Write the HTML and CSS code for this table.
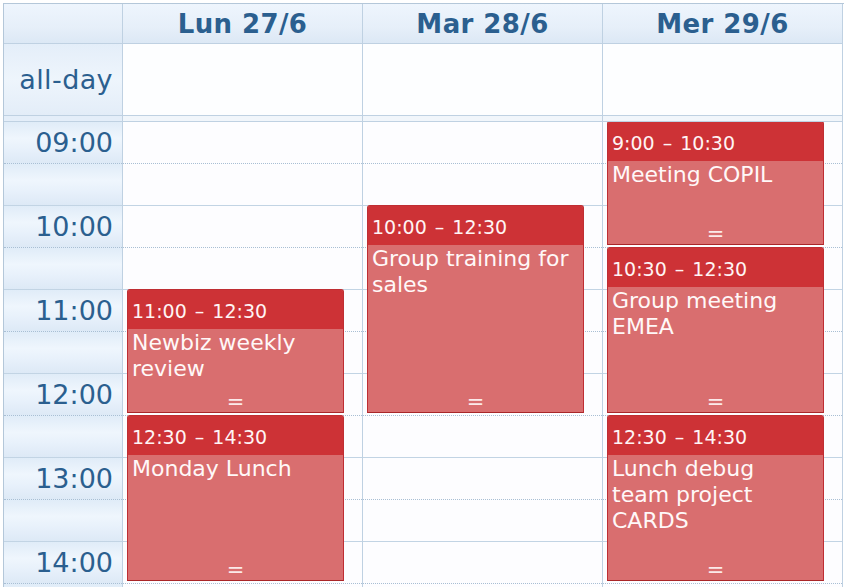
FILE: index.html
```html
<!DOCTYPE html>
<html>
<head>
<meta charset="utf-8">
<link rel="stylesheet" href="styles.css">
</head>
<body>
<div class="cal">
  <div class="row head">
    <div class="gutter"></div>
    <div class="dayhead">Lun 27/6</div>
    <div class="dayhead">Mar 28/6</div>
    <div class="dayhead">Mer 29/6</div>
  </div>
  <div class="row allday">
    <div class="gutter">all-day</div>
    <div class="cell"></div>
    <div class="cell"></div>
    <div class="cell"></div>
  </div>
  <div class="row divider">
    <div class="gutter"></div>
    <div class="cell"></div>
    <div class="cell"></div>
    <div class="cell"></div>
  </div>
  <div class="grid">
    <div class="gcol">
      <div class="hs a"><span>09:00</span></div><div class="hs b"></div>
      <div class="hs a"><span>10:00</span></div><div class="hs b"></div>
      <div class="hs a"><span>11:00</span></div><div class="hs b"></div>
      <div class="hs a"><span>12:00</span></div><div class="hs b"></div>
      <div class="hs a"><span>13:00</span></div><div class="hs b"></div>
      <div class="hs a"><span>14:00</span></div><div class="hs b"></div>
    </div>
    <div class="dcol">
      <div class="hs a"></div><div class="hs b"></div>
      <div class="hs a"></div><div class="hs b"></div>
      <div class="hs a"></div><div class="hs b"></div>
      <div class="hs a"></div><div class="hs b"></div>
      <div class="hs a"></div><div class="hs b"></div>
      <div class="hs a"></div><div class="hs b"></div>
      <div class="ev" style="top:167px;height:124px">
        <div class="ev-time">11:00 – 12:30</div>
        <div class="ev-title">Newbiz weekly review</div>
        <div class="ev-resize">=</div>
      </div>
      <div class="ev" style="top:293px;height:166px">
        <div class="ev-time">12:30 – 14:30</div>
        <div class="ev-title">Monday Lunch</div>
        <div class="ev-resize">=</div>
      </div>
    </div>
    <div class="dcol">
      <div class="hs a"></div><div class="hs b"></div>
      <div class="hs a"></div><div class="hs b"></div>
      <div class="hs a"></div><div class="hs b"></div>
      <div class="hs a"></div><div class="hs b"></div>
      <div class="hs a"></div><div class="hs b"></div>
      <div class="hs a"></div><div class="hs b"></div>
      <div class="ev" style="top:83px;height:208px">
        <div class="ev-time">10:00 – 12:30</div>
        <div class="ev-title">Group training for sales</div>
        <div class="ev-resize">=</div>
      </div>
    </div>
    <div class="dcol">
      <div class="hs a"></div><div class="hs b"></div>
      <div class="hs a"></div><div class="hs b"></div>
      <div class="hs a"></div><div class="hs b"></div>
      <div class="hs a"></div><div class="hs b"></div>
      <div class="hs a"></div><div class="hs b"></div>
      <div class="hs a"></div><div class="hs b"></div>
      <div class="ev" style="top:-1px;height:124px">
        <div class="ev-time">9:00 – 10:30</div>
        <div class="ev-title">Meeting COPIL</div>
        <div class="ev-resize">=</div>
      </div>
      <div class="ev" style="top:125px;height:166px">
        <div class="ev-time">10:30 – 12:30</div>
        <div class="ev-title">Group meeting EMEA</div>
        <div class="ev-resize">=</div>
      </div>
      <div class="ev" style="top:293px;height:166px">
        <div class="ev-time">12:30 – 14:30</div>
        <div class="ev-title">Lunch debug team project CARDS</div>
        <div class="ev-resize">=</div>
      </div>
    </div>
  </div>
</div>
</body>
</html>
```
FILE: styles.css
```css
html, body {
  margin: 0;
  padding: 0;
  height: 587px;
  overflow: hidden;
  background: #ffffff;
  font-family: "DejaVu Sans", "Verdana", sans-serif;
}

.cal {
  margin: 3px 0 0 3px;
  width: 840px;
  border-left: 1px solid #b4c7d9;
  border-top: 1px solid #b4c7d9;
}

.row,
.grid {
  display: grid;
  grid-template-columns: 119px 240px 240px 240px;
}

.grid {
  height: 465px;
  overflow: hidden;
}

.row > div {
  box-sizing: border-box;
  border-right: 1px solid #bfd1e2;
  border-bottom: 1px solid #bfd1e2;
}

.head > div {
  height: 40px;
  background: linear-gradient(#eef5fd, #e6eff9 60%, #dce8f5);
}

.dayhead {
  display: flex;
  align-items: center;
  justify-content: center;
  padding-top: 1px;
  font-weight: bold;
  font-size: 26px;
  letter-spacing: 0.4px;
  color: #2b5f8f;
}

.allday > div {
  height: 72px;
  background: #fdfeff;
}

.allday > .gutter {
  background: linear-gradient(#e4eef9, #eef5fc 50%, #e3edf8);
  display: flex;
  align-items: center;
  justify-content: flex-end;
  padding-right: 9px;
  font-size: 27px;
  letter-spacing: 0.4px;
  color: #2b5f8f;
}

.divider > div {
  height: 6px;
  background: #f1f6fb;
}

.divider > .gutter {
  background: #e4eef9;
}

.gcol,
.dcol {
  box-sizing: border-box;
  border-right: 1px solid #bfd1e2;
}

.dcol {
  position: relative;
  background: #fdfdff;
}

.hs {
  box-sizing: border-box;
  height: 42px;
}

.hs.a {
  border-bottom: 1px dotted #a9bfd4;
}

.hs.b {
  border-bottom: 1px solid #c2d4e4;
}

.gcol .hs {
  background: linear-gradient(#e0ecf8, #eff6fd 40%, #e8f1fb 65%, #dde9f6);
}

.gcol .hs.a {
  display: flex;
  align-items: center;
  justify-content: flex-end;
  padding-right: 9px;
  font-size: 27px;
  color: #2b5f8f;
}

.ev {
  position: absolute;
  left: 4px;
  width: 217px;
  box-sizing: border-box;
  border: 1px solid #bf2e33;
  border-bottom-color: #a92629;
  border-radius: 3px 3px 0 0;
  background: #d96e6f;
  color: #ffffff;
  overflow: hidden;
}

.ev-time {
  background: #cd3236;
  font-size: 19px;
  line-height: 22px;
  height: 39px;
  box-sizing: border-box;
  padding: 10px 0 0 4px;
  word-spacing: 2px;
  color: #fff4f4;
}

.ev-title {
  font-size: 22px;
  line-height: 26px;
  padding: 1px 8px 0 4px;
  color: #fff8f8;
}

.ev-resize {
  position: absolute;
  left: 0;
  right: 0;
  bottom: 2px;
  text-align: center;
  font-size: 21px;
  line-height: 16px;
  color: #fbeaea;
}
```
